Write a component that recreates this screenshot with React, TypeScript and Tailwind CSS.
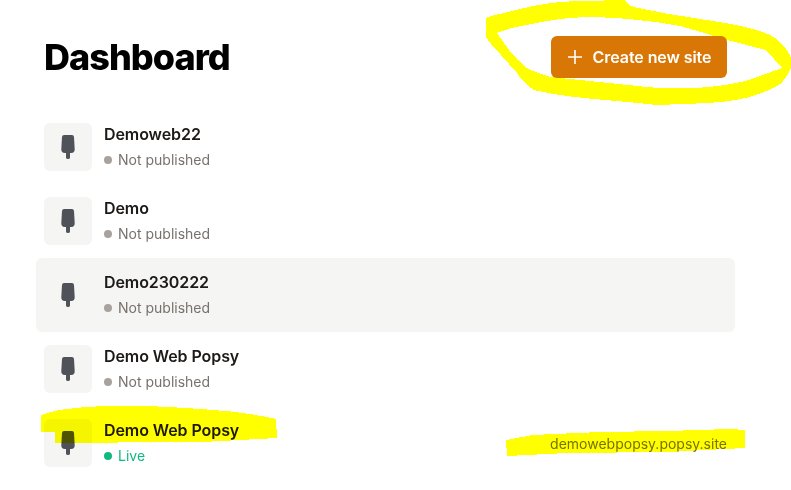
const sites = [
  { name: "Demoweb22", live: false, url: "", active: false },
  { name: "Demo", live: false, url: "", active: false },
  { name: "Demo230222", live: false, url: "", active: true },
  { name: "Demo Web Popsy", live: false, url: "", active: false },
  { name: "Demo Web Popsy", live: true, url: "demowebpopsy.popsy.site", active: false },
];

function Popsicle() {
  return (
    <svg width="14" height="24" viewBox="0 0 14 24" className="block">
      <path d="M3 0H11Q12.8 0 13 2L13.7 14Q13.8 18 10.2 18H9V22.5Q9 24 7 24Q5 24 5 22.5V18H3.8Q0.2 18 0.3 14L1 2Q1.2 0 3 0Z" fill="#4f5258" />
    </svg>
  );
}

function Row({ site }: { site: (typeof sites)[number] }) {
  return (
    <div className={`flex h-[74px] items-center rounded-md px-2 ${site.active ? "bg-[#f5f5f4]" : ""}`}>
      <div className="flex h-12 w-12 shrink-0 items-center justify-center rounded-md bg-[#f5f5f4]">
        <Popsicle />
      </div>
      <div className="mb-[2px] ml-3 flex flex-col">
        <div className="text-[16px] leading-6 font-semibold tracking-[-0.005em] text-[#1c1917]">{site.name}</div>
        <div className="mt-1 flex items-center text-[14px] leading-5">
          <span className={`mr-[6px] h-2 w-2 rounded-full ${site.live ? "bg-[#10b981]" : "bg-[#a8a29e]"}`} />
          <span className={site.live ? "text-[#10b981]" : "text-[#78716c]"}>{site.live ? "Live" : "Not published"}</span>
        </div>
      </div>
      {site.url && <div className="ml-auto text-[14px] text-[#78716c]">{site.url}</div>}
    </div>
  );
}

export default function App() {
  return (
    <div className="relative h-[490px] w-[791px] overflow-hidden bg-white font-['Inter',sans-serif]">
      <div className="ml-9 flex w-[691px] items-center justify-between pt-9 pb-[8px] pl-2">
        <h1 className="text-[36px] leading-[42px] font-extrabold tracking-[-0.027em] text-black">Dashboard</h1>
        <button className="flex h-[42px] w-[176px] items-center justify-center gap-[10px] rounded-md bg-[#d97706] text-[16px] font-semibold tracking-[-0.005em] text-white">
          <svg width="16" height="16" viewBox="0 0 16 16" fill="none" stroke="white" strokeWidth="1.6">
            <path d="M8 1V15M1 8H15" />
          </svg>
          Create new site
        </button>
      </div>
      <div className="mt-6 ml-9 flex w-[699px] flex-col">
        {sites.map((s, i) => (
          <Row key={i} site={s} />
        ))}
      </div>
      <svg className="pointer-events-none absolute top-0 left-0 mix-blend-multiply" width="791" height="490" viewBox="0 0 791 490" shapeRendering="crispEdges">
        <g fill="#ffff00">
          <path
            fillRule="evenodd"
            d="M486 18Q486 17 504 13Q530 6 551 3Q570 1 584 1L624 0L629 5Q634 7 638 8L669 14L719 22Q745 26 763 32Q776 37 783 45Q789 52 791 58V68Q787 78 779 85Q765 93 746 98Q728 102 709 103L657 105L638 103L584 98Q555 95 534 90Q524 84 517 73L501 55Q490 44 486 37Z M497 33L511 28L541 22Q562 18 584 17Q612 17 638 20Q660 22 680 26Q705 33 727 40L766 50L782 68L749 80Q730 85 709 87Q690 89 669 88Q652 88 638 86L551 77Q537 73 527 68Q517 60 509 50Z"
          />
          <path d="M41 415Q50 412 59 410Q80 407 103 406Q135 405 169 407Q205 409 236 412Q258 415 276 419L277 438L203 442L143 442L93 443L55 443L55 432L41 432Z" />
          <path d="M506 440L533 435L600 432L667 431L730 429L745 430L745 448L667 452L567 453L507 456Z" />
        </g>
      </svg>
    </div>
  );
}
